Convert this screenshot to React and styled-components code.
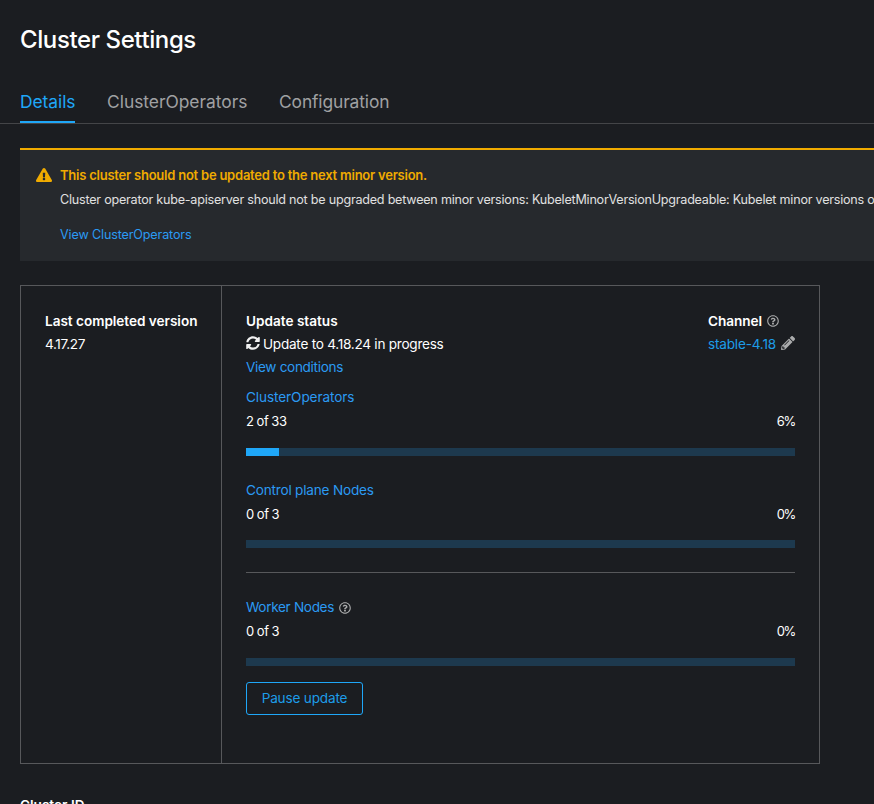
import React from "react";
import styled, { createGlobalStyle } from "styled-components";
import { FaExclamationTriangle, FaPencilAlt, FaRegQuestionCircle, FaSyncAlt } from "react-icons/fa";

const GlobalStyle = createGlobalStyle`
  * { box-sizing: border-box; }
  body { margin: 0; background: #1b1d21; overflow: hidden; }
`;

const Page = styled.main`
  height: 804px;
  overflow: hidden;
  background: #1b1d21;
  color: #fff;
  font-family: Inter, "Liberation Sans", sans-serif;
  font-size: 13.6px;
  white-space: nowrap;
`;

const Title = styled.h1`
  margin: 0;
  padding: 22px 20px 0;
  height: 86px;
  font-size: 24px;
  line-height: 36px;
  font-weight: 500;
  letter-spacing: -0.4px;
`;

const Tabs = styled.nav`
  display: flex;
  gap: 32px;
  height: 38px;
  padding: 0 20px;
  border-bottom: 1px solid #444548;
`;

const Tab = styled.a`
  width: ${(p) => p.$width}px;
  height: 37px;
  border-bottom: 2px solid ${(p) => (p.$active ? "#1fa7f8" : "transparent")};
  color: ${(p) => (p.$active ? "#1fa7f8" : "#a0a1a3")};
  font-size: 17.4px;
  line-height: 32px;
  letter-spacing: ${(p) => p.$track}px;
`;

const Alert = styled.section`
  display: flex;
  gap: 8px;
  height: 113px;
  margin: 24px 0 24px 20px;
  padding: 15px 0 0 16px;
  overflow: hidden;
  border-top: 2px solid #f0ab00;
  background: #26292d;
`;

const AlertIcon = styled(FaExclamationTriangle)`
  flex: none;
  width: 16px;
  height: 16px;
  margin-top: 2px;
  color: #f0ab00;
`;

const AlertTitle = styled.h2`
  margin: 0;
  color: #f0ab00;
  font-size: 13px;
  line-height: 20px;
  font-weight: 600;
  letter-spacing: -0.23px;
`;

const AlertText = styled.p`
  margin: 5px 0 15px;
  color: #e0e0e0;
  font-size: 12.6px;
  line-height: 20px;
  letter-spacing: -0.23px;
`;

const Link = styled.a`
  color: ${(p) => (p.$bright ? "#1d9ce8" : "#2b9af3")};
  letter-spacing: ${(p) => p.$track || 0}px;
`;

const AlertLink = styled(Link)`
  display: block;
  font-size: 12.6px;
  line-height: 20px;
`;

const Card = styled.section`
  display: grid;
  grid-template-columns: 200px 1fr;
  width: 800px;
  height: 479px;
  margin-left: 20px;
  border: 1px solid #57585b;
`;

const Pane = styled.div`
  padding: 24px;
  border-left: ${(p) => (p.$divided ? "1px solid #57585b" : "0")};
`;

const Label = styled.h3`
  margin: 0;
  font-size: 13.6px;
  line-height: 23px;
  font-weight: 600;
  letter-spacing: ${(p) => p.$track || 0}px;
`;

const Line = styled.div`
  display: flex;
  align-items: center;
  height: 23px;
  line-height: 15px;
  letter-spacing: ${(p) => p.$track || 0}px;
`;

const StatusHeader = styled.div`
  display: flex;
  justify-content: space-between;
  height: 76px;
`;

const Channel = styled.div`
  width: 87px;
`;

const SyncIcon = styled(FaSyncAlt)`
  width: 14px;
  height: 14px;
  margin: 0 3px 3px 0;
  color: #f0f0f0;
`;

const HelpIcon = styled(FaRegQuestionCircle)`
  width: 12px;
  height: 12px;
  margin: 0 0 ${(p) => p.$lift || 0}px 5px;
  color: #aaabac;
`;

const EditIcon = styled(FaPencilAlt)`
  width: 14px;
  height: 14px;
  margin: 0 0 3px auto;
  color: #aaabac;
`;

const Group = styled.div`
  height: ${(p) => p.$height}px;
`;

const Counts = styled.div`
  display: flex;
  justify-content: space-between;
  height: 24px;
  margin-bottom: ${(p) => p.$gap}px;
  font-size: 13px;
  line-height: 24px;
  letter-spacing: -0.5px;
`;

const Percent = styled.span`
  letter-spacing: -1.3px;
`;

const Track = styled.div`
  height: 8px;
  background: #1d394e;
`;

const Fill = styled.div`
  height: 8px;
  background: #1fa7f8;
`;

const Divider = styled.hr`
  margin: 0 0 23px;
  border: 0;
  border-top: 1px solid #57585b;
`;

const PauseButton = styled.button`
  display: block;
  width: 117px;
  height: 33px;
  padding: 0 0 2px;
  border: 1px solid #1fa7f8;
  border-radius: 3px;
  background: transparent;
  color: #1d9ce8;
  font: inherit;
  letter-spacing: -0.18px;
`;

const ClusterId = styled(Label)`
  margin: 30px 0 0 20px;
`;

function Progress({ name, track, count, percent, height, gap = 15, help }) {
  return (
    <Group $height={height}>
      <Line>
        <Link $track={track}>{name}</Link>
        {help && <HelpIcon />}
      </Line>
      <Counts $gap={gap}>
        <span>{count}</span>
        <Percent>{percent}%</Percent>
      </Counts>
      <Track>
        <Fill style={{ width: `${percent}%` }} />
      </Track>
    </Group>
  );
}

export default function App() {
  return (
    <Page>
      <GlobalStyle />
      <Title>Cluster Settings</Title>
      <Tabs>
        <Tab $active $width={55} $track={-0.05}>Details</Tab>
        <Tab $width={140} $track={-0.02}>ClusterOperators</Tab>
        <Tab $width={111} $track={-0.12}>Configuration</Tab>
      </Tabs>
      <Alert>
        <AlertIcon />
        <div>
          <AlertTitle>This cluster should not be updated to the next minor version.</AlertTitle>
          <AlertText>
            Cluster operator kube-apiserver should not be upgraded between minor versions:
            KubeletMinorVersionUpgradeable: Kubelet minor versions on
          </AlertText>
          <AlertLink $track={-0.15}>View ClusterOperators</AlertLink>
        </div>
      </Alert>
      <Card>
        <Pane>
          <Label $track={-0.03}>Last completed version</Label>
          <Line $track={-0.35}>4.17.27</Line>
        </Pane>
        <Pane $divided>
          <StatusHeader>
            <div>
              <Label>Update status</Label>
              <Line $track={-0.26}><SyncIcon />Update to 4.18.24 in progress</Line>
              <Line><Link $track={-0.33}>View conditions</Link></Line>
            </div>
            <Channel>
              <Line><Label $track={-0.05}>Channel</Label><HelpIcon $lift={2} /></Line>
              <Line><Link $bright $track={-0.2}>stable-4.18</Link><EditIcon /></Line>
            </Channel>
          </StatusHeader>
          <Progress name="ClusterOperators" track={-0.1} count="2 of 33" percent={6} height={93} />
          <Progress name="Control plane Nodes" track={-0.2} count="0 of 3" percent={0} height={93} gap={14} />
          <Divider />
          <Progress name="Worker Nodes" track={-0.33} count="0 of 3" percent={0} height={86} help />
          <PauseButton>Pause update</PauseButton>
        </Pane>
      </Card>
      <ClusterId>Cluster ID</ClusterId>
    </Page>
  );
}
